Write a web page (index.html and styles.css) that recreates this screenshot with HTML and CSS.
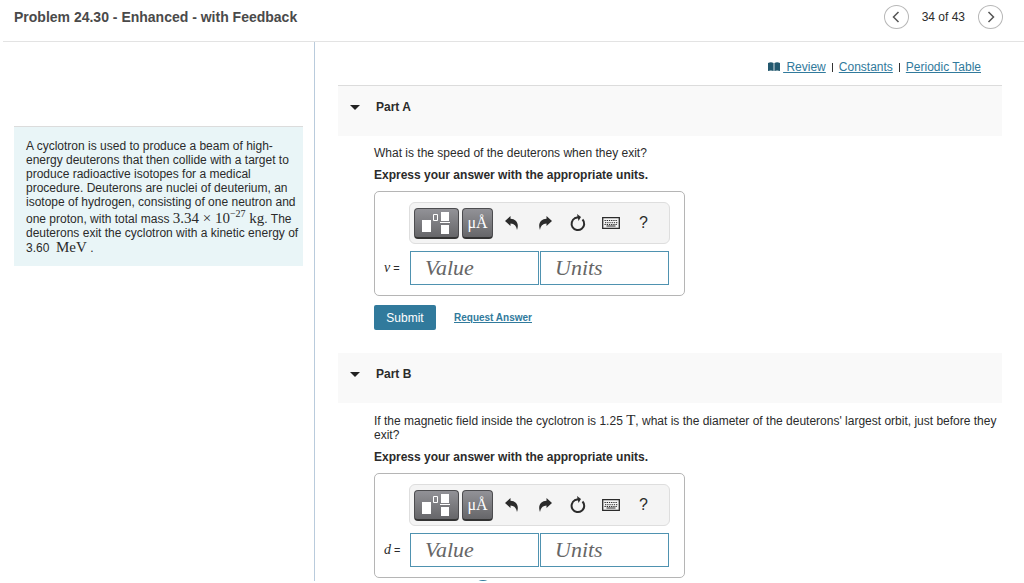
FILE: index.html
```html
<!DOCTYPE html>
<html lang="en">
<head>
<meta charset="utf-8">
<title>Problem 24.30</title>
<link rel="stylesheet" href="styles.css">
</head>
<body>
<svg class="defs" aria-hidden="true">
  <symbol id="i-template" viewBox="0 0 30 24"><path fill="#fff" d="M0 9h9v12H0zM19 1h8v9h-8zM19 14h8v9h-8zM18 11h10v1H18z"/><path fill="none" stroke="#fff" d="M11.500 3.500h4v6h-4z"/></symbol>
  <symbol id="i-undo" viewBox="0 0 14 14"><path d="M0 5 5.500 0v2.700C11 3 14.500 7 12 14 11.300 10 9.500 8 5.500 7.600V10z"/></symbol>
  <symbol id="i-redo" viewBox="0 0 14 14"><path d="M14 5 8.500 0v2.700C3 3-.5 7 2 14 2.700 10 4.500 8 8.500 7.600V10z"/></symbol>
  <symbol id="i-reset" viewBox="0 0 16 18"><path fill="none" stroke="currentColor" stroke-width="2" d="M5 4.200a6.300 6.300 0 1 0 7.500 1.300M4.500 4.200 9 3"/><path d="M7 0l4 3-2.500 4z"/></symbol>
  <symbol id="i-keys" viewBox="0 0 18 12"><path fill="none" stroke="currentColor" stroke-width="1.300" d="M.7.7h16.600v10.600H.7z"/><path fill="none" stroke="currentColor" stroke-dasharray="1.300 .9" d="M2.500 3.500h13M3 5.700h12.500M2.500 7.500h13"/><path stroke="currentColor" d="M4.500 9h9"/></symbol>
  <symbol id="i-book" viewBox="0 0 12 10"><path d="M0 1q3-1.400 5.600 0v8Q3 8 0 9zM6.400 1Q9 -.4 12 1v8Q9 8 6.400 9z"/></symbol>
</svg>
<header class="topbar">
  <h1 class="title">Problem 24.30 - Enhanced - with Feedback</h1>
  <nav class="pager">
    <button class="round" aria-label="Previous"><svg width="8" height="12" viewBox="0 0 8 12"><path d="M6.500 1 1.500 6l5 5"/></svg></button>
    <span>34 of 43</span>
    <button class="round" aria-label="Next"><svg width="8" height="12" viewBox="0 0 8 12"><path d="m1.500 1 5 5-5 5"/></svg></button>
  </nav>
</header>
<div class="columns">
  <aside class="side">
    <p class="intro">A cyclotron is used to produce a beam of high-energy deuterons that then collide with a target to produce radioactive isotopes for a medical procedure. Deuterons are nuclei of deuterium, an isotope of hydrogen, consisting of one neutron and one proton, with total mass <span class="math">3.34 × 10<sup>−27</sup> kg</span>. The deuterons exit the cyclotron with a kinetic energy of 3.60 &nbsp;<span class="math">MeV</span> .</p>
  </aside>
  <main class="main">
    <nav class="links">
      <svg class="book" width="12" height="10"><use href="#i-book"/></svg>
      <a href="#">&nbsp;Review</a><i class="bar"></i><a href="#">Constants</a><i class="bar"></i><a href="#">Periodic Table</a>
    </nav>
    <section class="part">
      <h2 class="part-head first"><span class="caret"></span>Part A</h2>
      <div class="part-body">
        <p class="question">What is the speed of the deuterons when they exit?</p>
        <p class="hint">Express your answer with the appropriate units.</p>
        <div class="answer">
          <div class="tools">
            <button class="dark wide" aria-label="Templates"><svg width="30" height="24"><use href="#i-template"/></svg></button>
            <button class="dark" aria-label="Units symbols">μÅ</button>
            <button class="tool" aria-label="Undo"><svg width="14" height="14"><use href="#i-undo"/></svg></button>
            <button class="tool" aria-label="Redo"><svg width="14" height="14"><use href="#i-redo"/></svg></button>
            <button class="tool" aria-label="Reset"><svg width="16" height="18"><use href="#i-reset"/></svg></button>
            <button class="tool" aria-label="Keyboard"><svg width="18" height="12"><use href="#i-keys"/></svg></button>
            <button class="tool">?</button>
          </div>
          <div class="entry">
            <label class="var" for="value-a"><em>v</em> =</label>
            <input id="value-a" class="field" placeholder="Value">
            <input class="field" placeholder="Units" aria-label="Units for v">
          </div>
        </div>
        <div class="actions">
          <button class="submit">Submit</button>
          <a class="request" href="#">Request Answer</a>
        </div>
      </div>
    </section>
    <section class="part">
      <h2 class="part-head"><span class="caret"></span>Part B</h2>
      <div class="part-body">
        <p class="question">If the magnetic field inside the cyclotron is 1.25 <span class="math">T</span>, what is the diameter of the deuterons' largest orbit, just before they exit?</p>
        <p class="hint">Express your answer with the appropriate units.</p>
        <div class="answer">
          <div class="tools">
            <button class="dark wide" aria-label="Templates"><svg width="30" height="24"><use href="#i-template"/></svg></button>
            <button class="dark" aria-label="Units symbols">μÅ</button>
            <button class="tool" aria-label="Undo"><svg width="14" height="14"><use href="#i-undo"/></svg></button>
            <button class="tool" aria-label="Redo"><svg width="14" height="14"><use href="#i-redo"/></svg></button>
            <button class="tool" aria-label="Reset"><svg width="16" height="18"><use href="#i-reset"/></svg></button>
            <button class="tool" aria-label="Keyboard"><svg width="18" height="12"><use href="#i-keys"/></svg></button>
            <button class="tool">?</button>
          </div>
          <div class="entry">
            <label class="var" for="value-b"><em>d</em> =</label>
            <input id="value-b" class="field" placeholder="Value">
            <input class="field" placeholder="Units" aria-label="Units for d">
          </div>
        </div>
        <div class="marker"></div>
      </div>
    </section>
  </main>
</div>
</body>
</html>
```
FILE: styles.css
```css
* { box-sizing: border-box; }
body {
  margin: 0;
  height: 100vh;
  overflow: hidden;
  display: flex;
  flex-direction: column;
  background: #fff;
  color: #2b2b2b;
  font: 12px/14px "Liberation Sans", Arial, sans-serif;
}
h1, h2, p { margin: 0; }
button { padding: 0; border: 0; background: none; font: inherit; color: inherit; }
svg { display: block; fill: currentColor; }
.defs { position: absolute; width: 0; height: 0; }
a { color: #317a9c; }
.math { font: 15px/15px "Liberation Serif", serif; white-space: nowrap; }
.math sup { font-size: 10px; line-height: 10px; }

.topbar {
  flex: none;
  height: 42px;
  margin-left: 3px;
  padding: 0 21px 7px 11px;
  display: flex;
  align-items: center;
  justify-content: space-between;
  border-bottom: 1px solid #e3e3e3;
}
.title { font-size: 14px; line-height: 18px; color: #4a4a4a; }
.pager { display: flex; align-items: center; gap: 13px; font-size: 12px; }
.round {
  width: 25px;
  height: 24px;
  display: grid;
  place-items: center;
  border: 1px solid #b8b8b8;
  border-radius: 50%;
}
.round path { fill: none; stroke: #555; stroke-width: 1.500; }

.columns { flex: 1; min-height: 0; display: flex; margin-bottom: 2px; overflow: hidden; }
.side { flex: none; width: 315px; padding: 84px 11px 0 14px; border-right: 1px solid #b9cbdc; }
.intro { padding: 12px 2px 11px 12px; background: #e9f5f7; border-top: 1px solid #dcdcdc; }
.main { flex: 1; min-width: 0; padding: 0 22px 0 23px; }
.links { height: 43px; padding: 7px 21px 0 0; display: flex; align-items: center; justify-content: flex-end; }
.book { color: #23586e; margin-right: 3px; }
.bar { width: 1px; height: 9px; margin: 0 6px; background: #333; }

.part-head {
  height: 50px;
  padding: 0 12px 8px;
  display: flex;
  align-items: center;
  gap: 16px;
  background: #f9f9f9;
  font-size: 12px;
}
.first { height: 51px; border-top: 1px solid #dcdcdc; }
.caret { border: 5px solid transparent; border-top-color: #222; border-bottom: 0; }
.part-body { padding: 10px 3px 23px 36px; }
.hint { margin: 8px 0 9px; font-weight: bold; }

.answer { width: 311px; padding: 10px 15px 10px 9px; border: 1px solid #b5b5b5; border-radius: 5px; }
.tools {
  height: 42px;
  margin: 0 -1px 0 25px;
  padding: 0 4px;
  display: flex;
  align-items: center;
  background: #f4f4f4;
  border: 1px solid #dedede;
  border-radius: 6px;
}
.dark {
  width: 31px;
  height: 31px;
  margin-right: 2px;
  display: grid;
  place-items: center;
  border: 1px solid #4c4c4f;
  border-bottom: 2px solid #333;
  border-radius: 4px;
  background: linear-gradient(#929297, #666669);
  color: #fff;
  font: 16px/24px "Liberation Serif", serif;
}
.wide { width: 45px; margin-right: 3px; }
.tool { width: 33px; height: 30px; display: grid; place-items: center; font-size: 16px; }
.entry { margin-top: 7px; display: flex; align-items: center; gap: 1px; }
.var { width: 25px; font-size: 11px; white-space: nowrap; }
.var em { font: italic 14px/14px "Liberation Serif", serif; }
.field {
  flex: 1;
  min-width: 0;
  height: 34px;
  padding: 0 14px;
  border: 1px solid #4f92b0;
  background: #fff;
  font: italic 22px/30px "Liberation Serif", serif;
}
.field::placeholder { color: #666; opacity: 1; }

.actions { margin-top: 9px; display: flex; align-items: center; gap: 18px; }
.submit { width: 62px; height: 25px; border-radius: 2px; background: #317a9c; color: #fff; font-size: 12px; }
.request { font-size: 10px; font-weight: bold; }
.marker { width: 20px; height: 20px; margin: 2px 0 0 99px; border-radius: 50%; background: #317a9c; }
```
